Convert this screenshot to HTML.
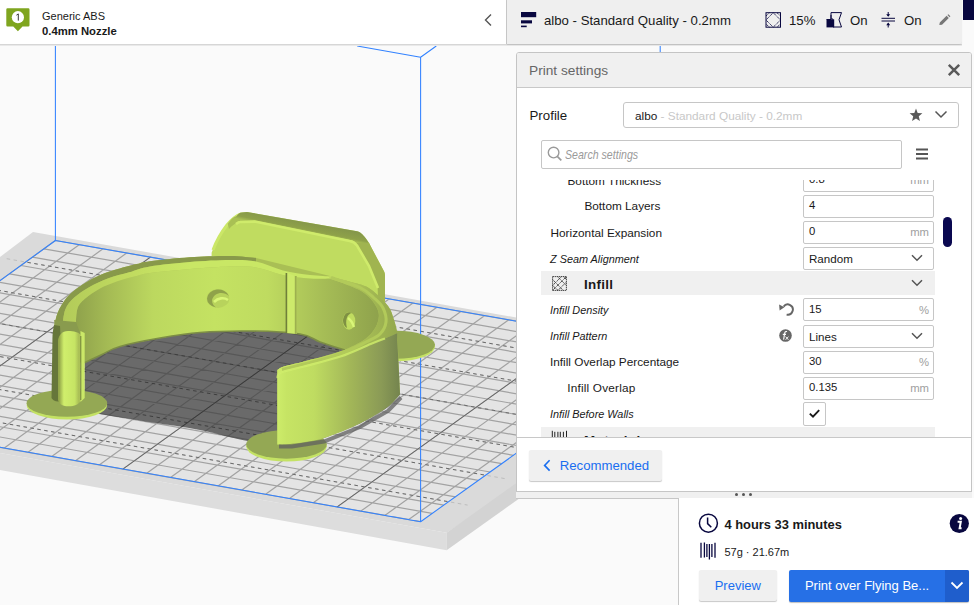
<!DOCTYPE html>
<html><head><meta charset="utf-8">
<style>
*{margin:0;padding:0;box-sizing:border-box}
html,body{width:974px;height:605px;overflow:hidden;background:#fafafa;font-family:"Liberation Sans",sans-serif;color:#191919}
.a{position:absolute;white-space:nowrap}
.lbl{position:absolute;font-size:11.8px;white-space:nowrap;color:#191919}
.it{font-style:italic;transform:scaleX(0.92);transform-origin:0 0}
.fld{position:absolute;left:803px;width:131px;height:23px;border:1px solid #c6c6c6;border-radius:2px;background:#fff}
.fld span{position:absolute;left:5px;top:3.8px;font-size:11.3px;color:#191919}
.fld i{position:absolute;right:4px;top:4.3px;font-size:11.3px;color:#a0a0a0;font-style:normal}
.fld b{position:absolute;left:5px;top:4.8px;font-size:11.6px;font-weight:normal;color:#191919}
.chev{position:absolute;left:107px;top:6.8px}
</style></head><body>

<svg width="974" height="605" viewBox="0 0 974 605" style="position:absolute;left:0;top:0">
<defs>
 <linearGradient id="gwall" gradientUnits="userSpaceOnUse" x1="76" x2="385" y1="0" y2="0">
  <stop offset="0" stop-color="#8fa24c"/><stop offset="0.1" stop-color="#a4ba54"/><stop offset="0.25" stop-color="#bcd85f"/><stop offset="0.45" stop-color="#c4e262"/><stop offset="0.62" stop-color="#bfdb60"/><stop offset="0.8" stop-color="#a6bd56"/><stop offset="1" stop-color="#8c9f4b"/>
 </linearGradient>
 <linearGradient id="gfront" gradientUnits="userSpaceOnUse" x1="277" x2="400" y1="0" y2="0">
  <stop offset="0" stop-color="#cdec6a"/><stop offset="0.08" stop-color="#c6e464"/><stop offset="0.3" stop-color="#bfdc61"/><stop offset="0.6" stop-color="#a2b658"/><stop offset="0.85" stop-color="#8a9a56"/><stop offset="1" stop-color="#74844e"/>
 </linearGradient>
 <linearGradient id="gpill" gradientUnits="userSpaceOnUse" x1="51" x2="85" y1="0" y2="0">
  <stop offset="0" stop-color="#6e7e3c"/><stop offset="0.25" stop-color="#98ac4c"/><stop offset="0.38" stop-color="#d0ee6c"/><stop offset="0.7" stop-color="#c6e464"/><stop offset="0.82" stop-color="#a8bd55"/><stop offset="1" stop-color="#c8e466"/>
 </linearGradient>
 <linearGradient id="grim" gradientUnits="userSpaceOnUse" x1="60" x2="190" y1="0" y2="0">
  <stop offset="0" stop-color="#b2ca59"/><stop offset="0.5" stop-color="#c0da5f"/><stop offset="1" stop-color="#c9e765"/>
 </linearGradient>
 <linearGradient id="gtabtop" gradientUnits="userSpaceOnUse" x1="300.5" y1="221" x2="298.5" y2="231">
  <stop offset="0" stop-color="#85974a"/><stop offset="0.7" stop-color="#8ea149"/><stop offset="1" stop-color="#a9c054"/>
 </linearGradient>
 <linearGradient id="grimR" gradientUnits="userSpaceOnUse" x1="277" y1="0" x2="397" y2="0">
  <stop offset="0" stop-color="#cdea68"/><stop offset="0.45" stop-color="#bcd55e"/><stop offset="0.75" stop-color="#a5bb54"/><stop offset="1" stop-color="#94a84e"/>
 </linearGradient>
 <clipPath id="plateclip"><polygon points="55.4,240.5 664.7,347.1 420.6,521.7 -185.0,414.6"/></clipPath>
 <clipPath id="shclip"><path d="M84.5 362.7C87.4 361.3 96.1 357.2 102.0 354.5C107.9 351.8 110.3 349.1 120.0 346.4C129.7 343.6 146.7 340.3 160.0 338.0C173.3 335.7 185.0 333.7 200.0 332.5C215.0 331.3 233.3 330.8 250.0 331.0C266.7 331.2 288.3 332.2 300.0 334.0C311.7 335.8 312.5 339.3 320.0 342.0C327.5 344.7 340.8 348.7 345.0 350.0L360 360L400 394.5L387.3 407.3L360.0 423.6L323.6 438.2L290.0 444.0L277.3 444.5L277.3 444.5C271.9 443.8 257.9 442.9 245.0 440.5C232.1 438.1 215.8 433.1 200.0 430.0C184.2 426.9 166.7 424.7 150.0 422.0C133.3 419.3 108.3 415.3 100.0 414.0L84.5 404Z"/></clipPath>
</defs>
<!-- plate -->
<polygon points="33,232 700,350 700,364 446.6,532.8 0,453 0,257" fill="#dadada"/>
<polygon points="0,453 446.6,532.8 446.6,550.2 0,470" fill="#dddddd"/>
<polygon points="446.6,532.8 700,352 700,370 446.6,550.2" fill="#d3d3d3"/>
<polygon points="55.4,240.5 664.7,347.1 420.6,521.7 -185.0,414.6" fill="#e4e4e4"/>
<path d="M55.4 240.5L-185.0 414.6M79.2 244.7L-161.4 418.8M103.0 248.8L-137.7 423.0M126.7 253.0L-114.1 427.1M150.5 257.1L-90.4 431.3M174.4 261.3L-66.8 435.5M198.2 265.5L-43.1 439.7M222.0 269.7L-19.4 443.9M245.9 273.8L4.3 448.1M269.7 278.0L28.0 452.3M293.6 282.2L51.7 456.5M317.4 286.3L75.5 460.7M341.3 290.5L99.2 464.9M365.2 294.7L122.9 469.1M389.1 298.9L146.7 473.3M413.0 303.1L170.5 477.5M436.9 307.3L194.2 481.7M460.9 311.4L218.0 485.9M484.8 315.6L241.8 490.1M508.8 319.8L265.6 494.3M532.7 324.0L289.4 498.5M556.7 328.2L313.3 502.7M580.7 332.4L337.1 506.9M604.7 336.6L360.9 511.1M628.7 340.8L384.8 515.4M652.7 345.0L408.7 519.6M55.4 240.5L664.7 347.1M43.9 248.8L653.0 355.4M32.4 257.1L641.4 363.8M20.9 265.5L629.7 372.1M9.5 273.8L618.1 380.5M-2.0 282.1L606.4 388.8M-13.5 290.4L594.8 397.1M-24.9 298.7L583.1 405.5M-36.4 307.0L571.5 413.8M-47.9 315.3L559.8 422.1M-59.3 323.6L548.2 430.4M-70.8 331.9L536.6 438.7M-82.2 340.2L525.0 447.0M-93.6 348.4L513.4 455.3M-105.1 356.7L501.8 463.7M-116.5 365.0L490.1 472.0M-127.9 373.3L478.5 480.3M-139.4 381.5L466.9 488.6M-150.8 389.8L455.4 496.8M-162.2 398.1L443.8 505.1M-173.6 406.3L432.2 513.4M-185.0 414.6L420.6 521.7" stroke="#a2a2a2" stroke-width="1.2" fill="none"/>
<path d="M150.5 257.1L-90.4 431.3M365.2 294.7L122.9 469.1M580.7 332.4L337.1 506.9" stroke="#606060" stroke-width="0.9" fill="none"/>
<path d="M6.7 258.7L653.7 372.1M-30.1 285.3L616.4 398.7M-66.7 311.9L579.1 425.4M-103.3 338.4L541.9 452.0M-139.9 364.9L504.8 478.6M-176.4 391.4L467.6 505.1" stroke="#bdbdbd" stroke-width="1" stroke-dasharray="3.5 3.5" fill="none"/>
<path d="M6.7 258.7L653.7 372.1M-30.1 285.3L616.4 398.7M-66.7 311.9L579.1 425.4M-103.3 338.4L541.9 452.0M-139.9 364.9L504.8 478.6M-176.4 391.4L467.6 505.1" stroke="#6a6a6a" stroke-width="1" stroke-dasharray="3.5 3.5" fill="none" clip-path="url(#plateclip)"/>
<!-- blue volume -->
<g stroke="#3282ff" stroke-width="1.05" fill="none">
 <path d="M55.4 240.5L664.7 347.1M420.6 521.7L-185.0 414.6M55.4 240.5L-185.0 414.6M420.6 521.7L664.7 347.1"/>
 <path d="M55.4 45 L55.4 240.5 M420.6 57.2 L420.6 521.7 M420.6 57.2 L357.2 46 M420.6 57.2 L436.3 46 M660.2 45 L660.2 60"/>
</g>
<!-- shadow -->
<g clip-path="url(#shclip)">
 <rect x="0" y="300" width="520" height="200" fill="#6a6a6a"/>
 <path d="M55.4 240.5L-185.0 414.6M79.2 244.7L-161.4 418.8M103.0 248.8L-137.7 423.0M126.7 253.0L-114.1 427.1M150.5 257.1L-90.4 431.3M174.4 261.3L-66.8 435.5M198.2 265.5L-43.1 439.7M222.0 269.7L-19.4 443.9M245.9 273.8L4.3 448.1M269.7 278.0L28.0 452.3M293.6 282.2L51.7 456.5M317.4 286.3L75.5 460.7M341.3 290.5L99.2 464.9M365.2 294.7L122.9 469.1M389.1 298.9L146.7 473.3M413.0 303.1L170.5 477.5M436.9 307.3L194.2 481.7M460.9 311.4L218.0 485.9M484.8 315.6L241.8 490.1M508.8 319.8L265.6 494.3M532.7 324.0L289.4 498.5M556.7 328.2L313.3 502.7M580.7 332.4L337.1 506.9M604.7 336.6L360.9 511.1M628.7 340.8L384.8 515.4M652.7 345.0L408.7 519.6M55.4 240.5L664.7 347.1M43.9 248.8L653.0 355.4M32.4 257.1L641.4 363.8M20.9 265.5L629.7 372.1M9.5 273.8L618.1 380.5M-2.0 282.1L606.4 388.8M-13.5 290.4L594.8 397.1M-24.9 298.7L583.1 405.5M-36.4 307.0L571.5 413.8M-47.9 315.3L559.8 422.1M-59.3 323.6L548.2 430.4M-70.8 331.9L536.6 438.7M-82.2 340.2L525.0 447.0M-93.6 348.4L513.4 455.3M-105.1 356.7L501.8 463.7M-116.5 365.0L490.1 472.0M-127.9 373.3L478.5 480.3M-139.4 381.5L466.9 488.6M-150.8 389.8L455.4 496.8M-162.2 398.1L443.8 505.1M-173.6 406.3L432.2 513.4M-185.0 414.6L420.6 521.7" stroke="#575757" stroke-width="1.1" fill="none"/>
 <path d="M150.5 257.1L-90.4 431.3M365.2 294.7L122.9 469.1M580.7 332.4L337.1 506.9" stroke="#3a3a3a" stroke-width="1" fill="none"/>
 <path d="M6.7 258.7L653.7 372.1M-30.1 285.3L616.4 398.7M-66.7 311.9L579.1 425.4M-103.3 338.4L541.9 452.0M-139.9 364.9L504.8 478.6M-176.4 391.4L467.6 505.1" stroke="#3e3e3e" stroke-width="1" stroke-dasharray="3.5 3.5" fill="none"/>
</g>
<ellipse cx="396" cy="346.5" rx="39" ry="14.8" fill="#c4e264"/><ellipse cx="396" cy="344.8" rx="39" ry="14" fill="#94a854"/><ellipse cx="66.9" cy="405" rx="40.3" ry="14.6" fill="#c4e264"/><ellipse cx="66.9" cy="403.2" rx="40.3" ry="13.6" fill="#94a854"/><ellipse cx="286.5" cy="446.3" rx="40.3" ry="15.3" fill="#c4e264"/><ellipse cx="286.5" cy="444.4" rx="40.3" ry="14.3" fill="#94a854"/>
<path d="M211.6 256 L211.6 252.8 C214 246 216 242 218 238.8 C222 231 225 226 227.7 223.7 C231 219 234 216.5 236.4 216.2 C238 214 240 212.7 241.7 212.5 L247 211.9 L357.1 231.3 C359.5 232 361 233 362.5 234.5 C365 237 367 240 369 243.1 L384 271.2 C385 273 385 275 385 277 L385 302 L300 280 L256 262 Z" fill="#c0dc60"/>
<path d="M213 250 C216 242 220 234 227 225 C232 219 236 216 241 214" stroke="#cbe767" stroke-width="3" fill="none"/>
<path d="M227.7 223.7 C231 219 234 216.5 236.4 216.2 C238 214 240 212.7 241.7 212.5 L247 211.9 L357.1 231.3 C359.5 232 361 233 362.5 234.5 C365 237 367 240 369 243.1 L371 248 L356 243.1 C354 241 352 240 349.6 239.9 L254.7 220.5 L239.6 221.6 C236 222.5 232 226 229 229 Z" fill="url(#gtabtop)"/>
<path d="M369 243.1 L384 271.2 C385 273 385 275 385 277 L385 302 L378 298 L377.6 286.2 L369 264.7 L356 243.1 Z" fill="#a0b450"/>
<path d="M236 224 C238 222.5 239 222 240 222 L254.7 221.6 L349.6 241 C353 241.5 355 243 357 245.5 L369 266 L378 288" stroke="#cfeb6b" stroke-width="2.6" fill="none"/>
<path d="M54.1 327.3C54.7 324.8 55.7 317.4 57.8 312.5C59.9 307.6 63.3 301.8 66.8 297.6C70.3 293.4 73.8 290.7 78.7 287.2C83.7 283.7 90.6 279.6 96.5 276.8C102.4 274.0 107.6 272.2 114.3 270.1C121.0 268.0 130.8 265.6 136.7 264.1C142.6 262.6 141.2 262.3 150.0 261.2C158.8 260.1 176.4 258.2 189.7 257.3C203.0 256.4 218.9 255.9 230.0 256.0C241.1 256.1 251.7 257.7 256.0 258.0L330 276L328.0 276.0C332.8 277.3 349.8 281.4 357.0 283.6C364.2 285.9 365.8 285.8 371.0 289.5C376.2 293.2 384.2 300.9 388.0 306.0C391.8 311.1 392.4 315.5 394.0 320.0C395.6 324.5 396.8 330.8 397.3 333.0L400 394.5L277.3 444.5L277.3 369L277.3 370.0C278.4 369.4 279.6 367.9 284.0 366.5C288.4 365.1 294.6 364.0 304.0 361.5C313.4 359.0 330.2 355.2 340.5 351.3C350.8 347.4 361.8 340.5 366.0 338.4L345 350L345.0 350.0C340.8 348.7 327.5 344.7 320.0 342.0C312.5 339.3 311.7 335.8 300.0 334.0C288.3 332.2 266.7 331.2 250.0 331.0C233.3 330.8 215.0 331.3 200.0 332.5C185.0 333.7 173.3 335.7 160.0 338.0C146.7 340.3 129.7 343.6 120.0 346.4C110.3 349.1 107.9 351.8 102.0 354.5C96.1 357.2 87.4 361.3 84.5 362.7L75.7 362L54 336Z" fill="#a9bf55"/>
<path d="M75.7 330.3C76.0 326.8 75.7 314.7 77.2 309.5C78.7 304.3 80.9 302.6 84.6 299.1C88.3 295.6 94.0 291.7 99.5 288.7C105.0 285.7 111.1 283.3 117.3 281.2C123.5 279.1 131.2 277.4 136.7 276.0C142.1 274.6 141.1 274.2 150.0 273.0C158.9 271.8 176.7 270.1 190.0 269.0C203.3 267.9 219.0 266.8 230.0 266.5C241.0 266.2 247.2 266.1 256.0 267.5C264.8 268.9 274.0 273.2 283.0 275.0C292.0 276.8 302.2 277.9 310.0 278.5C317.8 279.1 326.7 278.5 330.0 278.5L330.0 278.5C335.3 280.7 354.2 286.6 362.0 291.5C369.8 296.4 374.4 302.8 377.0 308.0C379.6 313.2 379.3 317.9 377.5 323.0C375.7 328.1 372.2 333.7 366.0 338.4C359.8 343.1 350.8 347.4 340.5 351.3C330.2 355.2 313.4 359.0 304.0 361.5C294.6 364.0 288.4 365.1 284.0 366.5C279.6 367.9 278.4 369.4 277.3 370.0L345 350L345.0 350.0C340.8 348.7 327.5 344.7 320.0 342.0C312.5 339.3 311.7 335.8 300.0 334.0C288.3 332.2 266.7 331.2 250.0 331.0C233.3 330.8 215.0 331.3 200.0 332.5C185.0 333.7 173.3 335.7 160.0 338.0C146.7 340.3 129.7 343.6 120.0 346.4C110.3 349.1 107.9 351.8 102.0 354.5C96.1 357.2 87.4 361.3 84.5 362.7L75.7 362Z" fill="url(#gwall)"/>
<path d="M84.5 362.7C87.4 361.3 96.1 357.2 102.0 354.5C107.9 351.8 110.3 349.1 120.0 346.4C129.7 343.6 146.7 340.3 160.0 338.0C173.3 335.7 185.0 333.7 200.0 332.5C215.0 331.3 233.3 330.8 250.0 331.0C266.7 331.2 288.3 332.2 300.0 334.0C311.7 335.8 312.5 339.3 320.0 342.0C327.5 344.7 340.8 348.7 345.0 350.0" stroke="#7d8e45" stroke-width="1.6" fill="none"/>
<path d="M54.1 327.3C54.7 324.8 55.7 317.4 57.8 312.5C59.9 307.6 63.3 301.8 66.8 297.6C70.3 293.4 73.8 290.7 78.7 287.2C83.7 283.7 90.6 279.6 96.5 276.8C102.4 274.0 107.6 272.2 114.3 270.1C121.0 268.0 130.8 265.6 136.7 264.1C142.6 262.6 141.2 262.3 150.0 261.2C158.8 260.1 176.4 258.2 189.7 257.3C203.0 256.4 218.9 255.9 230.0 256.0C241.1 256.1 251.7 257.7 256.0 258.0L256.0 261.5C251.7 261.2 241.0 259.9 230.0 260.0C219.0 260.1 203.3 260.9 190.0 262.0C176.7 263.1 160.1 264.7 150.0 266.4C139.9 268.1 136.1 270.3 129.2 272.3C122.3 274.3 115.1 275.8 108.4 278.3C101.7 280.8 94.8 284.0 89.1 287.2C83.4 290.4 78.2 293.9 74.2 297.6C70.2 301.3 67.3 304.6 65.3 309.5C63.3 314.4 62.8 324.3 62.3 327.3Z" fill="#88994a"/>
<path d="M62.3 327.3C62.8 324.3 63.3 314.4 65.3 309.5C67.3 304.6 70.2 301.3 74.2 297.6C78.2 293.9 83.4 290.4 89.1 287.2C94.8 284.0 101.7 280.8 108.4 278.3C115.1 275.8 122.3 274.3 129.2 272.3C136.1 270.3 139.9 268.1 150.0 266.4C160.1 264.7 176.7 263.1 190.0 262.0C203.3 260.9 219.0 260.1 230.0 260.0C241.0 259.9 247.2 259.8 256.0 261.5C264.8 263.2 274.0 268.2 283.0 270.5C292.0 272.8 301.8 274.0 310.0 275.0C318.2 276.0 328.3 276.2 332.0 276.5L330 278.5L330.0 278.5C326.7 278.5 317.8 279.1 310.0 278.5C302.2 277.9 292.0 276.8 283.0 275.0C274.0 273.2 264.8 268.9 256.0 267.5C247.2 266.1 241.0 266.2 230.0 266.5C219.0 266.8 203.3 267.9 190.0 269.0C176.7 270.1 158.9 271.8 150.0 273.0C141.1 274.2 142.1 274.6 136.7 276.0C131.2 277.4 123.5 279.1 117.3 281.2C111.1 283.3 105.0 285.7 99.5 288.7C94.0 291.7 88.3 295.6 84.6 299.1C80.9 302.6 78.7 304.3 77.2 309.5C75.7 314.7 76.0 326.8 75.7 330.3Z" fill="url(#grim)"/>
<path d="M328.0 276.0C332.8 277.3 349.8 281.4 357.0 283.6C364.2 285.9 365.8 285.8 371.0 289.5C376.2 293.2 384.2 300.9 388.0 306.0C391.8 311.1 392.4 315.5 394.0 320.0C395.6 324.5 396.8 330.8 397.3 333.0L397.3 333.0C395.2 333.9 389.4 336.7 385.0 338.5C380.6 340.3 378.1 341.0 370.7 344.0C363.3 347.0 351.6 352.8 340.5 356.5C329.4 360.2 313.4 364.0 304.0 366.5C294.6 369.0 288.2 370.2 284.0 371.5C279.8 372.8 279.6 373.4 278.5 374.5C277.4 375.6 277.5 377.4 277.3 378.0L277.3 370.0C278.4 369.4 279.6 367.9 284.0 366.5C288.4 365.1 294.6 364.0 304.0 361.5C313.4 359.0 330.2 355.2 340.5 351.3C350.8 347.4 359.8 343.1 366.0 338.4C372.2 333.7 375.7 328.1 377.5 323.0C379.3 317.9 379.6 313.2 377.0 308.0C374.4 302.8 369.8 296.4 362.0 291.5C354.2 286.6 335.3 280.7 330.0 278.5Z" fill="url(#grimR)"/>
<path d="M331.0 277.5C335.8 279.2 352.8 284.1 360.0 287.5C367.2 290.9 370.2 294.6 374.0 298.0C377.8 301.4 381.0 304.0 383.0 308.0C385.0 312.0 386.5 317.7 386.0 322.0C385.5 326.3 383.3 330.7 380.0 334.0C376.7 337.3 372.6 338.7 366.0 342.0C359.4 345.3 350.8 350.1 340.5 353.8C330.2 357.5 313.8 361.4 304.0 364.0C294.2 366.6 285.7 368.6 282.0 369.5" stroke="#b2ca5a" stroke-width="3" fill="none"/>
<!-- slot -->
<path d="M286 272 L296.7 277 L296.7 334 L286 333 Z" fill="#cdea6b"/>
<rect x="285.6" y="273" width="1.6" height="60" fill="#6f7f3a"/>
<rect x="294.8" y="276" width="1.9" height="58" fill="#9db14f"/>
<!-- holes -->
<ellipse cx="218" cy="298.4" rx="11.3" ry="9.5" fill="#b8d35c"/>
<path d="M207 298.4 A11.3 9.5 0 0 1 229 296 C224 291 214 292 212 300 C212 304 214 306 216 307.6 A11.3 9.5 0 0 1 207 298.4Z" fill="#8fa24a"/>
<path d="M214 302 C218 298 224 297 228 300" stroke="#d9f678" stroke-width="2.6" fill="none"/>
<ellipse cx="349" cy="320.9" rx="6.3" ry="8.8" fill="#c0dc60"/>
<path d="M343 320.9 A6.3 8.8 0 0 1 352 313 C347 314 345 320 347 328 C345 327 343 324 343 320.9Z" fill="#7f9143"/>
<path d="M348 318 C351 320 353 324 354 327" stroke="#d9f678" stroke-width="2.4" fill="none"/>
<!-- left outer wall + pillar -->
<path d="M54.1 320 L76 322 L80.5 334 L70 336 L56 336 Z" fill="#899b4e"/>
<path d="M52.5 336 C53 330 53.5 327 54.1 325 L60 326 L64 400 C58 403 53 401 51.5 398 Z" fill="#66763a"/>
<path d="M58 340 C59 335 62 331 68 331 C74 331 78.5 332 80.5 335 L80.5 401 C78 406 70 407.5 63 405.5 C60 404.5 58.5 402 58 400 Z" fill="url(#gpill)"/>
<path d="M80.5 331 L84.7 333 L84.7 398 L80.5 402 Z" fill="#cbe868"/>
<path d="M80.8 336 L80.8 400" stroke="#6f7f3a" stroke-width="1"/>
<!-- front wall -->
<path d="M397.3 333.0C395.2 333.9 389.4 336.7 385.0 338.5C380.6 340.3 378.1 341.0 370.7 344.0C363.3 347.0 351.6 352.8 340.5 356.5C329.4 360.2 313.4 364.0 304.0 366.5C294.6 369.0 288.2 370.2 284.0 371.5C279.8 372.8 279.6 373.4 278.5 374.5C277.4 375.6 277.5 377.4 277.3 378.0L277.3 444.5L277.3 444.5C279.4 444.4 282.3 445.1 290.0 444.0C297.7 442.9 311.9 441.6 323.6 438.2C335.3 434.8 349.4 428.8 360.0 423.6C370.6 418.5 380.6 412.2 387.3 407.3C394.0 402.4 397.9 396.6 400.0 394.5L397.3 340Z" fill="url(#gfront)"/>
<path d="M385.0 338.5C382.6 339.4 378.1 341.0 370.7 344.0C363.3 347.0 351.6 352.8 340.5 356.5C329.4 360.2 313.4 364.0 304.0 366.5C294.6 369.0 288.2 370.2 284.0 371.5C279.8 372.8 279.6 373.4 278.5 374.5C277.4 375.6 277.5 377.4 277.3 378.0" stroke="#d0ee6c" stroke-width="2.2" fill="none" opacity="0.8"/>
<path d="M279 446.5 L292 446.5 L324 441.5 L360 427 L388 411 L401 397.5" stroke="#606060" stroke-width="4" fill="none" opacity="0.75"/>
</svg>

<!-- header left -->
<div class="a" style="left:0;top:0;width:506px;height:44px;background:#fff"></div>
<div class="a" style="left:0;top:44px;width:962px;height:1px;background:#d6d6d6"></div>
<div class="a" style="left:0;top:45px;width:962px;height:1px;background:#e9e9e9"></div>
<svg class="a" style="left:6px;top:8px" width="25" height="24" viewBox="0 0 25 24">
 <path d="M1.5 0.3 H22.3 A1.2 1.2 0 0 1 23.5 1.5 V17.2 A1.2 1.2 0 0 1 22.3 18.4 H16.5 L11.9 23.3 L7.3 18.4 H1.5 A1.2 1.2 0 0 1 0.3 17.2 V1.5 A1.2 1.2 0 0 1 1.5 0.3Z" fill="#7fa51f"/>
 <circle cx="11.9" cy="9.2" r="6.1" fill="#fff"/>
 <path d="M10.4 7.2 L12.3 5.9 V12.6" stroke="#3a3a3a" stroke-width="1" fill="none"/>
</svg>
<div class="a" style="left:42px;top:10px;font-size:11px;color:#191919">Generic ABS</div>
<div class="a" style="left:42px;top:24.8px;font-size:11.3px;font-weight:bold;color:#191919">0.4mm Nozzle</div>
<svg class="a" style="left:483px;top:13px" width="10" height="14" viewBox="0 0 10 14"><path d="M8 1.5 L2.5 7 L8 12.5" stroke="#555" stroke-width="1.4" fill="none"/></svg>
<div class="a" style="left:506px;top:0;width:1px;height:44px;background:#c8c8c8"></div>
<!-- header right -->
<div class="a" style="left:507px;top:0;width:455px;height:44px;background:#efefef;border-bottom-right-radius:3px;box-shadow:0 1px 1px rgba(0,0,0,0.10)"></div>
<div class="a" style="left:963px;top:0;width:11px;height:20px;background:#08073f"></div>
<svg class="a" style="left:520px;top:11px" width="18" height="18" viewBox="0 0 18 18">
 <rect x="1" y="1" width="15.2" height="5.2" fill="#08073f"/><rect x="1" y="9.3" width="11" height="3.1" fill="#08073f"/><rect x="1" y="14.6" width="5.7" height="1.6" fill="#08073f"/>
</svg>
<div class="a" style="left:544px;top:13px;font-size:13.2px;color:#191919">albo - Standard Quality - 0.2mm</div>
<svg class="a" style="left:765px;top:12px" width="17" height="16" viewBox="0 0 17 16">
 <rect x="1" y="0.7" width="14.5" height="14.5" fill="none" stroke="#08073f" stroke-width="1"/>
 <path d="M8.2 0.7 L15.5 8 L8.2 15.2 L1 8 Z M1 4 L4.5 0.7 M12 0.7 L15.5 4 M15.5 12 L12 15.2 M4.5 15.2 L1 12" fill="none" stroke="#08073f" stroke-width="0.9" stroke-dasharray="1.3 0.7"/>
</svg>
<div class="a" style="left:789px;top:13px;font-size:13.2px">15%</div>
<svg class="a" style="left:826px;top:12px" width="17" height="16" viewBox="0 0 17 16">
 <path d="M5 0.6 H15.5 L13 7.8 L15.5 15 H7 V7 H5 Z" fill="none" stroke="#08073f" stroke-width="1"/>
 <path d="M0.5 7.5 H8.2 V15.4 H0.5 Z" fill="#08073f"/>
 <path d="M0.5 7.5 L5 7.5 L5 3" stroke="#08073f" stroke-width="1" fill="none"/>
</svg>
<div class="a" style="left:850px;top:13px;font-size:13.2px">On</div>
<svg class="a" style="left:881px;top:11px" width="15" height="17" viewBox="0 0 15 17">
 <path d="M0.5 7.3 H14 M0.5 10 H14" stroke="#08073f" stroke-width="1"/>
 <path d="M7.2 1 V5 M7.2 12.5 V16.5" stroke="#08073f" stroke-width="1"/>
 <path d="M5.2 3.3 L7.2 5.8 L9.2 3.3 Z M5.2 14.2 L7.2 11.6 L9.2 14.2 Z" fill="#08073f"/>
</svg>
<div class="a" style="left:904px;top:13px;font-size:13.2px">On</div>
<svg class="a" style="left:938px;top:14px" width="13" height="12" viewBox="0 0 13 12">
 <path d="M1.3 11 L1.8 8.6 L8.6 1.8 L10.8 4 L4 10.8 Z M9.4 1 L10.4 0.2 L12.4 2.2 L11.6 3.2 Z" fill="#777"/>
</svg>
<!-- print settings panel -->
<div class="a" style="left:516px;top:52px;width:456px;height:447px;background:#fff;border:1px solid #c4c4c4;border-radius:3px 3px 0 0"></div>
<div class="a" style="left:517px;top:53px;width:454px;height:35px;background:#f0f0f0;border-bottom:1px solid #c8c8c8;border-radius:2px 2px 0 0"></div>
<div class="a" style="left:529px;top:62.5px;font-size:13.7px;color:#666">Print settings</div>
<svg class="a" style="left:947px;top:63px" width="14" height="14" viewBox="0 0 14 14"><path d="M1.8 1.8 L12.2 12.2 M12.2 1.8 L1.8 12.2" stroke="#5a5a5a" stroke-width="2.5"/></svg>
<div class="a" style="left:529.5px;top:108.2px;font-size:13.3px;color:#191919">Profile</div>
<div class="a" style="left:623px;top:101.6px;width:336px;height:26px;border:1px solid #c6c6c6;border-radius:3px;background:#fff"></div>
<div class="a" style="left:635px;top:108.5px;font-size:11.8px"><span style="color:#191919">albo</span><span style="color:#c8c8c8"> - Standard Quality - 0.2mm</span></div>
<svg class="a" style="left:909px;top:108px" width="14" height="14" viewBox="0 0 14 14"><path d="M7 0.6 L8.7 4.9 L13.4 5.2 L9.8 8.3 L10.9 12.9 L7 10.4 L3.1 12.9 L4.2 8.3 L0.6 5.2 L5.3 4.9 Z" fill="#5a5a5a"/></svg>
<svg class="a" style="left:934px;top:110px" width="14" height="9" viewBox="0 0 14 9"><path d="M1.5 1.5 L7 7 L12.5 1.5" stroke="#555" stroke-width="1.5" fill="none"/></svg>
<div class="a" style="left:541.4px;top:139.5px;width:361px;height:29.5px;border:1px solid #c6c6c6;border-radius:2px;background:#fff"></div>
<svg class="a" style="left:547px;top:146px" width="16" height="16" viewBox="0 0 16 16"><circle cx="6.6" cy="6.6" r="5.3" stroke="#9a9a9a" stroke-width="1.4" fill="none"/><path d="M10.3 10.3 L14.3 14.3" stroke="#9a9a9a" stroke-width="1.7"/></svg>
<div class="a" style="left:564.5px;top:148.3px;font-size:12.2px;font-style:italic;color:#9a9a9a;transform:scaleX(0.87);transform-origin:0 0">Search settings</div>
<svg class="a" style="left:915px;top:147px" width="14" height="14" viewBox="0 0 14 14"><path d="M1 2.5 H13 M1 7 H13 M1 11.5 H13" stroke="#555" stroke-width="2"/></svg>
<!-- settings list (clipped) -->
<div class="a" style="left:517px;top:179.5px;width:454px;height:257.5px;overflow:hidden">
 <div style="position:absolute;left:-517px;top:-179.5px;width:974px;height:605px">
  <div class="lbl" style="left:567.5px;top:173.5px">Bottom Thickness</div>
  <div class="fld" style="top:168.6px"><span>0.8</span><i>mm</i></div>
  <div class="lbl" style="left:584.4px;top:199.4px">Bottom Layers</div>
  <div class="fld" style="top:194.6px"><span>4</span></div>
  <div class="lbl" style="left:550.5px;top:225.6px">Horizontal Expansion</div>
  <div class="fld" style="top:220.7px"><span>0</span><i>mm</i></div>
  <div class="lbl it" style="left:550px;top:251.5px">Z Seam Alignment</div>
  <div class="fld" style="top:246.7px"><b>Random</b><svg class="chev" width="12" height="8" viewBox="0 0 12 8"><path d="M1 1.3 L6 6.3 L11 1.3" stroke="#555" stroke-width="1.5" fill="none"/></svg></div>
  <div class="a" style="left:541px;top:271.4px;width:394px;height:23.4px;background:#f0f0f0"></div>
  <svg class="a" style="left:552px;top:276px" width="15" height="15" viewBox="0 0 15 15">
   <rect x="0.6" y="0.6" width="13.8" height="13.8" fill="none" stroke="#333" stroke-width="0.9" stroke-dasharray="1.4 0.6"/>
   <path d="M0.6 9.5 L6 14.4 M0.6 3.5 L11.2 14.4 M5.5 0.6 L14.4 9.5 M11.5 0.6 L14.4 3.5 M0.6 9.5 L9.5 0.6 M0.6 14.4 L14.4 0.6 M6 14.4 L14.4 6" fill="none" stroke="#333" stroke-width="0.9" stroke-dasharray="1.4 0.6"/>
  </svg>
  <div class="lbl" style="left:584px;top:276.5px;font-weight:bold;font-size:13.4px;letter-spacing:0.3px">Infill</div>
  <svg class="a" style="left:911px;top:279px" width="12" height="8" viewBox="0 0 12 8"><path d="M1 1.3 L6 6.3 L11 1.3" stroke="#555" stroke-width="1.5" fill="none"/></svg>
  <div class="lbl it" style="left:550px;top:302.6px">Infill Density</div>
  <svg class="a" style="left:779px;top:303px" width="15" height="14" viewBox="0 0 15 14"><path d="M4.6 3.6 A5.1 5.1 0 1 1 7.6 11.6" stroke="#666" stroke-width="1.9" fill="none"/><path d="M0.1 1.6 L5.4 4.2 L0.6 7.4 Z" fill="#666"/></svg>
  <div class="fld" style="top:298.4px"><span>15</span><i>%</i></div>
  <div class="lbl it" style="left:550px;top:328.8px">Infill Pattern</div>
  <svg class="a" style="left:779px;top:329px" width="13" height="13" viewBox="0 0 13 13"><circle cx="6.5" cy="6.5" r="6.3" fill="#666"/><path d="M8 2.6 C6.6 2.2 5.9 3 5.7 4.2 L4.6 10.6 M3.8 5.4 H7" stroke="#fff" stroke-width="1.1" fill="none"/><path d="M6.6 7.6 L9.4 10.8 M9.4 7.6 L6.6 10.8" stroke="#fff" stroke-width="0.9"/></svg>
  <div class="fld" style="top:324.6px"><b>Lines</b><svg class="chev" width="12" height="8" viewBox="0 0 12 8"><path d="M1 1.3 L6 6.3 L11 1.3" stroke="#555" stroke-width="1.5" fill="none"/></svg></div>
  <div class="lbl" style="left:550px;top:355px">Infill Overlap Percentage</div>
  <div class="fld" style="top:350.7px"><span>30</span><i>%</i></div>
  <div class="lbl" style="left:567.2px;top:381.2px;letter-spacing:0.2px">Infill Overlap</div>
  <div class="fld" style="top:376.7px"><span>0.135</span><i>mm</i></div>
  <div class="lbl it" style="left:550px;top:407px">Infill Before Walls</div>
  <div class="a" style="left:803px;top:402.4px;width:23.4px;height:23.4px;border:1px solid #c6c6c6;border-radius:2px;background:#fff"></div>
  <svg class="a" style="left:808px;top:408px" width="13" height="11" viewBox="0 0 13 11"><path d="M1.8 5.6 L5 8.6 L11.2 2.2" stroke="#191919" stroke-width="1.9" fill="none"/></svg>
  <div class="a" style="left:541px;top:427.2px;width:394px;height:24px;background:#f0f0f0"></div>
  <svg class="a" style="left:551px;top:430px" width="17" height="15" viewBox="0 0 17 15"><path d="M1.3 0.8 V13 M3.8 1.8 V13 M6.9 1.8 V13 M9.3 1.8 V13 M12.4 1.8 V13 M15.5 0.8 V13" stroke="#222" stroke-width="1"/></svg>
  <div class="lbl" style="left:584px;top:433px;font-weight:bold;font-size:13.4px;letter-spacing:0.8px">Material</div>
 </div>
</div>
<div class="a" style="left:942.8px;top:217px;width:9.2px;height:30px;background:#0a0850;border-radius:5px"></div>
<div class="a" style="left:517px;top:437px;width:454px;height:1px;background:#c8c8c8"></div>
<div class="a" style="left:529px;top:450px;width:133px;height:31px;background:#f0f0f0;border-radius:2px;box-shadow:0 1px 1px rgba(0,0,0,0.22)"></div>
<svg class="a" style="left:542px;top:459px" width="10" height="13" viewBox="0 0 10 13"><path d="M7.6 1.2 L2.6 6.4 L7.6 11.6" stroke="#196ef0" stroke-width="1.6" fill="none"/></svg>
<div class="a" style="left:559.7px;top:458.4px;font-size:13.2px;color:#196ef0">Recommended</div>
<!-- resize strip -->
<div class="a" style="left:516px;top:491px;width:456px;height:8px;background:#f0f0f0;border-top:1px solid #c6c6c6;border-bottom:1px solid #c6c6c6"></div>
<div class="a" style="left:735px;top:493px;width:3px;height:3px;border-radius:2px;background:#555"></div>
<div class="a" style="left:742px;top:493px;width:3px;height:3px;border-radius:2px;background:#555"></div>
<div class="a" style="left:749px;top:493px;width:3px;height:3px;border-radius:2px;background:#555"></div>
<!-- bottom action panel -->
<div class="a" style="left:678px;top:498px;width:296px;height:107px;background:#fff;border-left:1px solid #c8c8c8"></div>
<svg class="a" style="left:698px;top:513px" width="21" height="21" viewBox="0 0 21 21"><circle cx="10.4" cy="10.2" r="9" stroke="#08073f" stroke-width="1.5" fill="none"/><path d="M9.6 4.6 V10.6 L13.3 14.3" stroke="#08073f" stroke-width="1.5" fill="none"/></svg>
<div class="a" style="left:724.4px;top:517.2px;font-size:12.9px;font-weight:bold">4 hours 33 minutes</div>
<svg class="a" style="left:700px;top:542px" width="17" height="18" viewBox="0 0 17 18">
 <path d="M1 0.8 V15.8 M4.4 0.5 V15.5 M6.9 2 V15 M9.4 2 V17.6 M11.9 2 V15 M15 0.8 V15.8" stroke="#08073f" stroke-width="1.3"/>
</svg>
<div class="a" style="left:724.4px;top:545.8px;font-size:11px">57g · 21.67m</div>
<div class="a" style="left:699px;top:570.2px;width:77.7px;height:30.5px;background:#f0f0f0;border-radius:2px;box-shadow:0 1px 1px rgba(0,0,0,0.22)"></div>
<div class="a" style="left:714.7px;top:578.2px;font-size:13px;color:#196ef0">Preview</div>
<div class="a" style="left:789px;top:570.1px;width:180px;height:31.5px;background:#2670e6;border-radius:2px;box-shadow:0 1px 1px rgba(0,0,0,0.25)"></div>
<div class="a" style="left:945px;top:570.1px;width:24px;height:31.5px;background:#1f5ecc;border-radius:0 2px 2px 0"></div>
<div class="a" style="left:804.9px;top:578.2px;font-size:13px;color:#fff">Print over Flying Be...</div>
<svg class="a" style="left:950px;top:581px" width="14" height="9" viewBox="0 0 14 9"><path d="M1.5 1.5 L7 7 L12.5 1.5" stroke="#fff" stroke-width="1.8" fill="none"/></svg>
<svg class="a" style="left:949px;top:513px" width="21" height="21" viewBox="0 0 21 21"><circle cx="10.3" cy="10.5" r="9.6" fill="#08073f"/><circle cx="11.6" cy="5.6" r="1.5" fill="#fff"/><path d="M8.6 8.8 H11.8 L10.6 15.2 H12.6" stroke="#fff" stroke-width="2" fill="none"/></svg>
</body></html>
